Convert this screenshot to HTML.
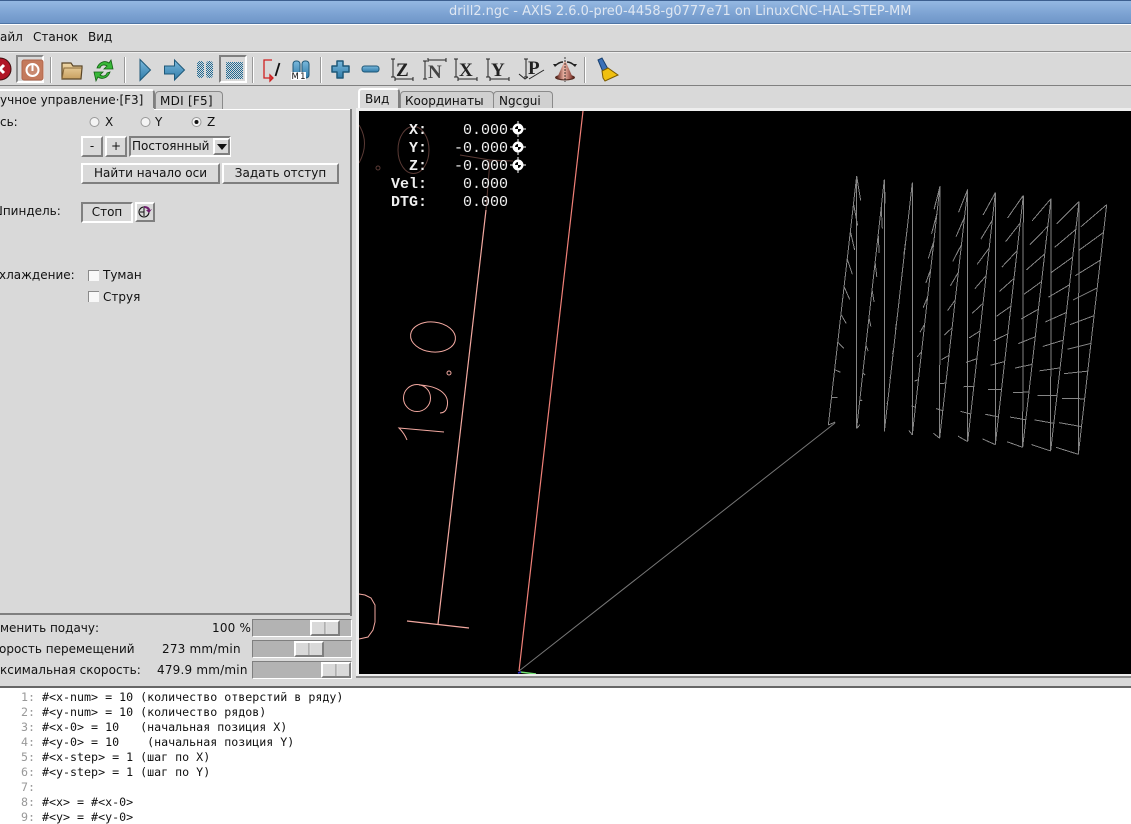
<!DOCTYPE html>
<html><head><meta charset="utf-8"><style>
html,body{margin:0;padding:0;background:#d9d9d9}
#r{position:relative;width:1131px;height:824px;overflow:hidden;background:#d9d9d9;font:12px "DejaVu Sans",sans-serif;color:#111}
#r div,#r span,#r svg{position:absolute}
.t{white-space:pre;line-height:16px;height:16px}
.u{letter-spacing:.2px}
.b{box-sizing:border-box;background:#d9d9d9;border:2px solid;border-color:#fff #7f7f7f #7f7f7f #fff;text-align:center;line-height:17px;white-space:pre}
.s{box-sizing:border-box;background:#d9d9d9;border:2px solid;border-color:#7f7f7f #fff #fff #7f7f7f;text-align:center;line-height:17px;white-space:pre}
.sep{width:2px;height:26px;top:57px;background:linear-gradient(90deg,#999 50%,#fff 50%)}
.tr{left:252px;width:100px;height:18px;box-sizing:border-box;background:#b3b3b3;border:1px solid;border-color:#7f7f7f #fff #fff #7f7f7f}
.th{width:30px;height:16px;top:0;box-sizing:border-box;background:linear-gradient(90deg,#d9d9d9 48%,#888 48%,#888 52%,#fff 52%,#d9d9d9 56%);border:2px solid;border-color:#fff #7f7f7f #7f7f7f #fff}
.tab{box-sizing:border-box;background:#d0d0d0;border:1px solid #8a8a8a;border-bottom:0;border-radius:4px 4px 0 0;text-align:left;white-space:pre;line-height:18px}
.on{background:#d9d9d9;border:2px solid #fff;border-right-color:#7f7f7f;border-bottom:0}
.m{font:11.65px "DejaVu Sans Mono",monospace;white-space:pre;line-height:15px;height:15px;left:42px}
.n{font:11.65px "DejaVu Sans Mono",monospace;white-space:pre;line-height:15px;height:15px;left:21px;color:#999}
.d{font:bold 15px "Liberation Mono",monospace;color:#f0f0f0;white-space:pre;line-height:18px;height:18px}
.v{font:15px "Liberation Mono",monospace;color:#f0f0f0;white-space:pre;line-height:18px;height:18px}
.c{width:11px;height:11px;box-sizing:border-box;background:#f8f8f8;border-top:1px solid #8a8a8a;border-left:1px solid #8a8a8a}
</style></head><body><div id="r">
<div style="left:0;top:0;width:1131px;height:24px;background:linear-gradient(#94b8e2,#7ca2d2 60%,#6f96c8);border-top:1px solid #3d5f8f;border-bottom:1px solid #4f75a5;box-sizing:border-box"></div>
<div class="t" style="left:449px;top:4px;color:#dfe7f2;font-size:12.95px">drill2.ngc - AXIS 2.6.0-pre0-4458-g0777e71 on LinuxCNC-HAL-STEP-MM</div>
<div style="left:0;top:24px;width:1131px;height:1px;background:#fff"></div>
<div class="t" style="left:0;top:29px">айл</div>
<div class="t" style="left:33px;top:29px">Станок</div>
<div class="t" style="left:88px;top:29px">Вид</div>
<div style="left:0;top:51px;width:1131px;height:2px;background:linear-gradient(#8a8a8a 50%,#eee 50%)"></div>
<div style="left:0;top:85px;width:1131px;height:1px;background:#808080"></div>

<div style="left:16px;top:55px;width:28px;height:28px;box-sizing:border-box;border:2px solid;border-color:#8a8a8a #fff #fff #8a8a8a"></div>
<div style="left:219px;top:55px;width:28px;height:28px;box-sizing:border-box;border:2px solid;border-color:#7f7f7f #fff #fff #7f7f7f"></div>
<div class="sep" style="left:50px"></div><div class="sep" style="left:124px"></div><div class="sep" style="left:252px"></div><div class="sep" style="left:320px"></div><div class="sep" style="left:584px"></div>

<svg style="left:0;top:50px" width="640" height="36" viewBox="0 50 640 36">
<defs>
<pattern id="ck" width="2" height="2" patternUnits="userSpaceOnUse"><rect width="2" height="2" fill="#d9d9d9"/><rect width="1" height="1" fill="#1f6a94"/><rect x="1" y="1" width="1" height="1" fill="#1f6a94"/></pattern>
<linearGradient id="bl" x1="0" y1="0" x2="0" y2="1"><stop offset="0" stop-color="#7ab8dc"/><stop offset="1" stop-color="#2f7ba8"/></linearGradient>
<linearGradient id="fo" x1="0" y1="0" x2="0" y2="1"><stop offset="0" stop-color="#f0d8a8"/><stop offset="1" stop-color="#c8a060"/></linearGradient>
<linearGradient id="co" x1="0" y1="0" x2="1" y2="0"><stop offset="0" stop-color="#6b2a22"/><stop offset=".45" stop-color="#f0b8a8"/><stop offset="1" stop-color="#7a3028"/></linearGradient>
</defs>
<circle cx="0" cy="69" r="11" fill="#b01525" stroke="#401010"/>
<path d="M-4 65l8 8M4 65l-8 8" stroke="#fff" stroke-width="3" fill="none"/>
<rect x="22" y="60" width="21" height="20" rx="2" fill="#c47a5c" stroke="#b0654a"/>
<circle cx="32.500" cy="70" r="6" fill="#c98a70" stroke="#fff" stroke-width="2"/>
<path d="M32.500 64v7" stroke="#fff" stroke-width="2"/>
<path d="M62 63h9l2 3h9v2l-1 11H62z" fill="url(#fo)" stroke="#5a4526" stroke-width="1.200"/>
<path d="M62 79l2-11h18" fill="none" stroke="#8a6a3a"/>
<path d="M97 68c2-6 8-8 12-5l2-3 2 9-9 0 3-3c-3-2-6-1-7 2z" fill="#38b838" stroke="#135f13" stroke-width=".8"/>
<path d="M110 72c-2 6-8 8-12 5l-2 4-2-9 9 0-3 3c3 2 6 1 7-2z" fill="#38b838" stroke="#135f13" stroke-width=".8"/>
<path d="M140 59.500v21l10.500-10.500z" fill="url(#bl)" stroke="#1e5878"/>
<path d="M164.500 66h10v-6l10 10-10 10v-6h-10z" fill="url(#bl)" stroke="#1e5878"/>
<rect x="197" y="61" width="7" height="17" rx="3" fill="url(#ck)"/>
<rect x="206" y="61" width="7" height="17" rx="3" fill="url(#ck)"/>
<rect x="226" y="62" width="17" height="17" rx="1" fill="url(#ck)"/>
<path d="M272 60h-8v18h8M270 75l3 3-3 3z" fill="none" stroke="#d02020" stroke-width="1.300"/>
<path d="M275.500 76l4-13" stroke="#111" stroke-width="1.800"/>
<rect x="293" y="61" width="7" height="17" rx="3" fill="url(#bl)" stroke="#1e5878"/>
<rect x="302" y="61" width="7" height="17" rx="3" fill="url(#bl)" stroke="#1e5878"/>
<rect x="291" y="72" width="15" height="8" fill="#fff"/>
<path d="M337 61h6v5h6v6h-6v6h-6v-6h-5v-6h5z" fill="url(#bl)" stroke="#1e5878" stroke-width="1.500" stroke-linejoin="round"/>
<rect x="362" y="66" width="17" height="6" rx="2.500" fill="url(#bl)" stroke="#1e5878"/>
<path d="M393 59v18M391 59h4M391 77h4M395 79h18M395 77v4M413 77v4" stroke="#222" fill="none"/>
<path d="M425 61v18M423 61h4M423 79h4M428 60h18M428 58v4M446 58v4" stroke="#222" fill="none"/>
<path d="M456 59v18M454 59h4M454 77h4M458 79h19M458 77v4M477 77v4" stroke="#222" fill="none"/>
<path d="M488 59v18M486 59h4M486 77h4M490 79h19M490 77v4M509 77v4" stroke="#222" fill="none"/>
<path d="M526 59v18M524 59h4M524 77h4M529 79l15-9M519 74l6 5 3-2" stroke="#222" fill="none"/>
<ellipse cx="565" cy="77.500" rx="10" ry="3" fill="#552a20"/>
<path d="M565 60l-8 18q8 3 16 0z" fill="url(#co)"/>
<path d="M565 57v25" stroke="#111" stroke-width=".8" stroke-dasharray="2 1"/>
<path d="M555 66c3-3 6-4 8-4M575 66c-3-3-6-4-8-4" stroke="#222" stroke-width="1.500" fill="none"/>
<path d="M555 67l-2-3 4 0zM575 67l2-3-4 0z" fill="#222"/>
<path d="M598 60l4-2 6 11-5 3z" fill="#3a70b8" stroke="#18406f"/>
<path d="M602 71l6-3 10 7-13 6-2-3z" fill="#f0c010" stroke="#7a5a00"/>
<text x="291.500" y="79" font-family="DejaVu Sans" font-size="8.500" fill="#111" textLength="14">M1</text>
<g font-family="Liberation Serif" font-weight="bold" font-size="19" fill="#222">
<text x="396" y="76">Z</text><text x="428" y="78" fill="#444">N</text><text x="459" y="76">X</text><text x="491" y="76">Y</text><text x="528" y="74">P</text>
</g>
</svg>

<div class="tab" style="left:155px;top:91px;width:68px;height:18px;padding-left:4px;letter-spacing:.25px">MDI [F5]</div>
<div class="tab on" style="left:-20px;top:89px;width:175px;height:20px;line-height:19px;padding-left:18px">учное управление·[F3]</div>
<div style="left:0;top:109px;width:351px;height:1px;background:#fff"></div>
<div style="left:350px;top:109px;width:2px;height:507px;background:#7f7f7f"></div>
<div style="left:0;top:613px;width:352px;height:2px;background:#7f7f7f"></div>
<div style="left:0;top:108px;width:154px;height:3px;background:#d9d9d9"></div>

<div class="t" style="left:0;top:114px">сь:</div>
<svg style="left:88px;top:116px" width="120" height="12" viewBox="88 116 120 12">
<circle cx="94.500" cy="122" r="4.500" fill="#f4f4f4" stroke="#999"/>
<circle cx="145.500" cy="122" r="4.500" fill="#f4f4f4" stroke="#999"/>
<circle cx="196.500" cy="122" r="4.500" fill="#f4f4f4" stroke="#999"/>
<circle cx="196.500" cy="122" r="2" fill="#111"/>
</svg>
<div class="t" style="left:105px;top:114px">X</div>
<div class="t" style="left:155px;top:114px">Y</div>
<div class="t" style="left:207px;top:114px">Z</div>
<div class="b" style="left:81px;top:136px;width:22px;height:21px">-</div>
<div class="b" style="left:105px;top:136px;width:22px;height:21px">+</div>
<div class="s" style="left:129px;top:136px;width:102px;height:21px;text-align:left;padding-left:1px;border-color:#7f7f7f #fff #fff #7f7f7f">Постоянный</div>
<div class="b" style="left:213px;top:138px;width:17px;height:17px"></div>
<svg style="left:216px;top:143px" width="12" height="8"><path d="M1 1h10l-5 6z" fill="#111"/></svg>
<div class="b" style="left:81px;top:163px;width:139px;height:21px">Найти начало оси</div>
<div class="b" style="left:222px;top:163px;width:117px;height:21px">Задать отступ</div>
<div class="t" style="left:-10px;top:203px">Шпиндель:</div>
<div class="s" style="left:81px;top:202px;width:52px;height:21px">Стоп</div>
<div class="b" style="left:135px;top:202px;width:20px;height:20px"></div>
<svg style="left:137px;top:203px" width="17" height="17" viewBox="137 203 17 17">
<circle cx="144" cy="212" r="5" fill="none" stroke="#111" stroke-width="1.100"/>
<path d="M144 208v8M140 212h4" stroke="#111"/>
<path d="M144 206c4 0 6 2 6 4l2-1-3 4-3-3 2 0c0-1-2-2-4-2z" fill="#702070"/>
</svg>
<div class="t" style="left:-1px;top:267px">хлаждение:</div>
<div class="c" style="left:88px;top:270px"></div>
<div class="t" style="left:103px;top:267px">Туман</div>
<div class="c" style="left:88px;top:291px"></div>
<div class="t" style="left:103px;top:289px">Струя</div>

<div class="t" style="left:0;top:620px">менить подачу:</div>
<div class="t u" style="left:212px;top:620px">100 %</div>
<div class="t" style="left:-1px;top:641px">орость перемещений</div>
<div class="t u" style="left:162px;top:641px">273 mm/min</div>
<div class="t u" style="left:0;top:662px;letter-spacing:.05px">ксимальная скорость:</div>
<div class="t u" style="left:157px;top:662px">479.9 mm/min</div>
<div class="tr" style="top:619px"><div class="th" style="left:57px"></div></div>
<div class="tr" style="top:640px"><div class="th" style="left:41px"></div></div>
<div class="tr" style="top:661px"><div class="th" style="left:68px"></div></div>

<div class="tab" style="left:400px;top:91px;width:94px;height:18px;padding-left:4px">Координаты</div>
<div class="tab" style="left:493px;top:91px;width:60px;height:18px;padding-left:5px">Ngcgui</div>
<div class="tab on" style="left:358px;top:88px;width:42px;height:21px;line-height:19px;padding-left:5px">Вид</div>
<div style="left:356px;top:108px;width:775px;height:3px;background:#eee"></div>
<div style="left:358px;top:88px;width:41px;height:23px;background:transparent"></div>
<div style="left:356px;top:108px;width:3px;height:568px;background:#eee"></div>
<div style="left:359px;top:111px;width:772px;height:563px;background:#000"></div>
<div style="left:356px;top:674px;width:775px;height:2px;background:#eee"></div>
<div style="left:356px;top:676px;width:775px;height:2px;background:#8a8a8a"></div>

<svg id="g" style="left:359px;top:111px" width="772" height="563" viewBox="359 111 772 563" fill="none">
<g id="grid" stroke="#858585" stroke-width="1" shape-rendering="crispEdges"></g>
<path d="M519 671L835 423" stroke="#777"/>
<path d="M583 111L519 671" stroke="#f08078" stroke-width="1.200"/>
<path d="M486 210L438 624" stroke="#f2a8a0" stroke-width="1.200"/>
<path d="M407 621L469 628" stroke="#f2a8a0" stroke-width="1.200"/>
<path d="M486 210L490 160" stroke="#5a3a35"/>
<path d="M460 155L490 160L513 161" stroke="#5a3a35"/>
<ellipse cx="433" cy="337" rx="22.500" ry="15" transform="rotate(6 433 337)" stroke="#f2a8a0"/>
<circle cx="449" cy="373" r="2" stroke="#f2a8a0"/>
<circle cx="417" cy="398" r="13.500" stroke="#f2a8a0"/>
<path d="M419 385C440 386 450 395 447 407C446 411 444 413 440 413" stroke="#f2a8a0"/>
<path d="M444 432L399 428C402 431 405 435 407 440" stroke="#f2a8a0"/>
<path d="M359 594L365 595L371 598L375 605L375 622L373 630L368 637L359 639" stroke="#f2a8a0"/>
<ellipse cx="413.500" cy="150" rx="15.500" ry="23.500" stroke="#5a3a35"/>
<path d="M359 125Q370 143 359 163" stroke="#5a3a35"/>
<circle cx="378" cy="168" r="2" stroke="#5a3a35"/>
<path d="M520 672L536 674" stroke="#70e070" stroke-width="1.500"/>
<path d="M518 673L521 672" stroke="#3030d0" stroke-width="1.500"/>
<g fill="#fff"><circle cx="518" cy="129" r="5.500"/><circle cx="518" cy="147" r="5.500"/><circle cx="518" cy="165" r="5.500"/></g>
<path d="M518 121v16M510 129h16M518 139v16M510 147h16M518 157v16M510 165h16" stroke="#fff"/>
<path d="M518 129h-3a3 3 0 0 1 3-3zM518 129h3a3 3 0 0 1-3 3zM518 147h-3a3 3 0 0 1 3-3zM518 147h3a3 3 0 0 1-3 3zM518 165h-3a3 3 0 0 1 3-3zM518 165h3a3 3 0 0 1-3 3z" fill="#000"/>
</svg>
<div class="d" style="left:409px;top:122px">X:</div><div class="v" style="left:454px;top:122px"> 0.000</div>
<div class="d" style="left:409px;top:140px">Y:</div><div class="v" style="left:454px;top:140px">-0.000</div>
<div class="d" style="left:409px;top:158px">Z:</div><div class="v" style="left:454px;top:158px">-0.000</div>
<div class="d" style="left:391px;top:176px">Vel:</div><div class="v" style="left:454px;top:176px"> 0.000</div>
<div class="d" style="left:391px;top:194px">DTG:</div><div class="v" style="left:454px;top:194px"> 0.000</div>

<div style="left:0;top:686px;width:1131px;height:2px;background:#666"></div>
<div style="left:0;top:688px;width:1131px;height:136px;background:#fff"></div>
<div class="n" style="top:690px">1:</div><div class="m" style="top:690px">#&lt;x-num&gt; = 10 (количество отверстий в ряду)</div>
<div class="n" style="top:705px">2:</div><div class="m" style="top:705px">#&lt;y-num&gt; = 10 (количество рядов)</div>
<div class="n" style="top:720px">3:</div><div class="m" style="top:720px">#&lt;x-0&gt; = 10   (начальная позиция X)</div>
<div class="n" style="top:735px">4:</div><div class="m" style="top:735px">#&lt;y-0&gt; = 10    (начальная позиция Y)</div>
<div class="n" style="top:750px">5:</div><div class="m" style="top:750px">#&lt;x-step&gt; = 1 (шаг по X)</div>
<div class="n" style="top:765px">6:</div><div class="m" style="top:765px">#&lt;y-step&gt; = 1 (шаг по Y)</div>
<div class="n" style="top:780px">7:</div>
<div class="n" style="top:795px">8:</div><div class="m" style="top:795px">#&lt;x&gt; = #&lt;x-0&gt;</div>
<div class="n" style="top:810px">9:</div><div class="m" style="top:810px">#&lt;y&gt; = #&lt;y-0&gt;</div>
</div>
<script>
(function(){
function X(z){return 820+z/3}function Y(z){return 170+z/3}
var tops=[[110,18],[193,28],[277,38],[360,48],[443,58],[526,68],[610,76],[693,86],[777,95],[860,104]];
var bots=[[25,765],[110,775],[193,785],[277,795],[359,805],[443,815],[526,824],[608,832],[692,843],[775,853]];
var vb=[[110,775],[193,785],[277,795],[359,805],[443,815],[526,824],[608,832],[692,843],[775,853]];
var e1=[[122,92],[113,167],[104,240],[97,313],[89,388],[79,461],[71,535],[62,607],[53,682],[46,756]];
var e2=[[783,170],[778,240],[766,317],[759,390],[750,464],[742,538],[732,611],[726,685],[717,758],[708,832]];
var d="";
for(var i=0;i<10;i++){
 d+="M"+X(tops[i][0])+" "+Y(tops[i][1])+"L"+X(bots[i][0])+" "+Y(bots[i][1]);
 if(i<9)d+="M"+X(tops[i][0])+" "+Y(tops[i][1])+"L"+X(vb[i][0])+" "+Y(vb[i][1]);
 for(var k=0;k<10;k++){
  var f=k/9,sx=tops[i][0]+(bots[i][0]-tops[i][0])*f,sy=tops[i][1]+(bots[i][1]-tops[i][1])*f;
  var ex=e1[k][0]+(e2[k][0]-e1[k][0])*i/9,ey=e1[k][1]+(e2[k][1]-e1[k][1])*i/9;
  d+="M"+X(sx)+" "+Y(sy)+"L"+X(ex)+" "+Y(ey);
 }
}
var p=document.createElementNS("http://www.w3.org/2000/svg","path");
p.setAttribute("d",d);document.getElementById("grid").appendChild(p);
})();
</script>
</body></html>
